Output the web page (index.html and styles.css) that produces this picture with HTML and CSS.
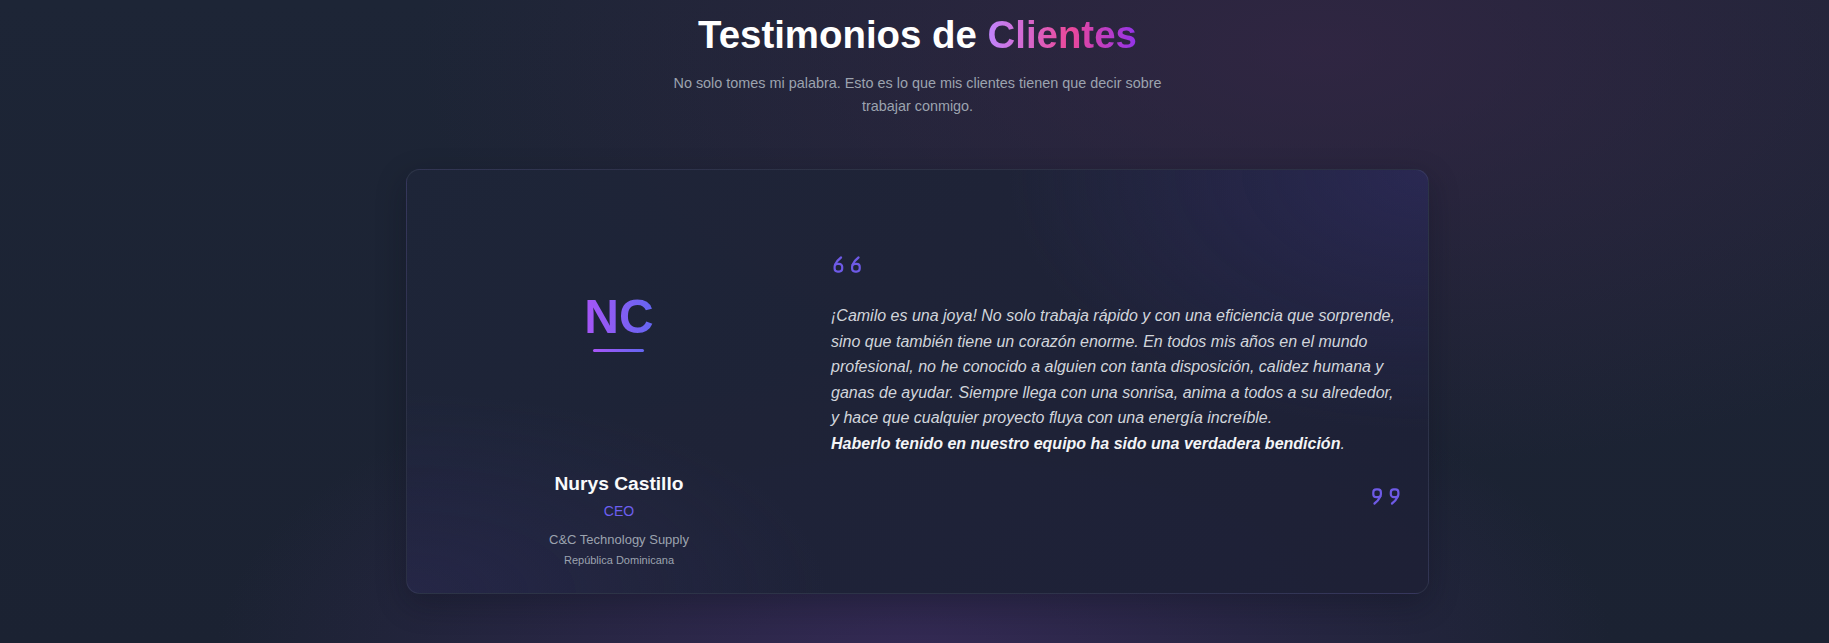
FILE: index.html
```html
<!DOCTYPE html>
<html lang="es">
<head>
<meta charset="utf-8">
<title>Testimonios de Clientes</title>
<link rel="stylesheet" href="styles.css">
</head>
<body>
<section class="testimonials">
  <header class="heading">
    <h2 class="title">Testimonios de <span class="accent">Clientes</span></h2>
    <p class="subtitle">No solo tomes mi palabra. Esto es lo que mis clientes tienen que decir sobre trabajar conmigo.</p>
  </header>

  <article class="card">
    <div class="author">
      <div class="avatar">
        <span class="initials">NC</span>
        <span class="initials-bar"></span>
      </div>
      <div class="info">
        <div class="name">Nurys Castillo</div>
        <div class="role">CEO</div>
        <div class="company">C&amp;C Technology Supply</div>
        <div class="country">República Dominicana</div>
      </div>
    </div>

    <div class="quote">
      <svg class="qmark" width="28" height="17" viewBox="0 0 28 17" aria-hidden="true">
        <g fill="none" stroke="currentColor" stroke-width="2.2" stroke-linecap="round" stroke-linejoin="round">
          <path d="M8 1.5 Q4 4.5 2.2 8.5"/>
          <rect x="1.6" y="7.8" width="7.6" height="7.8" rx="3"/>
          <path d="M25.5 1.5 Q21.5 4.5 19.7 8.5"/>
          <rect x="19.1" y="7.8" width="7.6" height="7.8" rx="3"/>
        </g>
      </svg>
      <p class="quote-text">¡Camilo es una joya! No solo trabaja rápido y con una eficiencia que sorprende, sino que también tiene un corazón enorme. En todos mis años en el mundo profesional, no he conocido a alguien con tanta disposición, calidez humana y ganas de ayudar. Siempre llega con una sonrisa, anima a todos a su alrededor, y hace que cualquier proyecto fluya con una energía increíble.<br><strong>Haberlo tenido en nuestro equipo ha sido una verdadera bendición</strong>.</p>
      <svg class="qmark qmark-close" width="28" height="17" viewBox="0 0 28 17" aria-hidden="true">
        <g fill="none" stroke="currentColor" stroke-width="2.2" stroke-linecap="round" stroke-linejoin="round" transform="rotate(180 14 8.5)">
          <path d="M8 1.5 Q4 4.5 2.2 8.5"/>
          <rect x="1.6" y="7.8" width="7.6" height="7.8" rx="3"/>
          <path d="M25.5 1.5 Q21.5 4.5 19.7 8.5"/>
          <rect x="19.1" y="7.8" width="7.6" height="7.8" rx="3"/>
        </g>
      </svg>
    </div>
  </article>
</section>
</body>
</html>
```

FILE: styles.css
```css
html, body {
  margin: 0;
  padding: 0;
}

body {
  min-height: 643px;
  font-family: "Liberation Sans", Arial, sans-serif;
  color: #e5e7eb;
  background-color: #1c2333;
  background-image:
    radial-gradient(ellipse 700px 320px at 50% 102%, rgba(72, 48, 112, 0.55), rgba(72, 48, 112, 0) 100%),
    radial-gradient(ellipse 900px 420px at 72% 8%, rgba(60, 38, 74, 0.6), rgba(60, 38, 74, 0) 100%),
    linear-gradient(180deg, #1d2536 0%, #1b2232 100%);
  overflow: hidden;
}

.testimonials {
  padding: 11px 0 40px 6px;
  display: flex;
  flex-direction: column;
  align-items: center;
}

.heading {
  display: flex;
  flex-direction: column;
  align-items: center;
  text-align: center;
}

.title {
  margin: 0;
  font-size: 38.4px;
  line-height: 48px;
  font-weight: 700;
  color: #ffffff;
}

.accent {
  background: linear-gradient(90deg, #c084fc 0%, #ec4899 55%, #9333ea 100%);
  -webkit-background-clip: text;
  background-clip: text;
  color: transparent;
}

.subtitle {
  margin: 13px 0 0;
  max-width: 512px;
  font-size: 14.4px;
  line-height: 23px;
  color: #9ca3af;
}

.card {
  margin-top: 51px;
  width: 1023px;
  box-sizing: border-box;
  padding: 32px 28px 26px 32px;
  display: grid;
  grid-template-columns: 360px 1fr;
  column-gap: 32px;
  border: 1px solid rgba(148, 163, 184, 0.12);
  border-radius: 14px;
  background-color: rgba(30, 33, 54, 0.85);
  background-image:
    radial-gradient(ellipse 420px 260px at 100% 0%, rgba(58, 50, 120, 0.42), rgba(58, 50, 120, 0) 100%),
    radial-gradient(ellipse 420px 200px at 0% 100%, rgba(56, 48, 110, 0.28), rgba(56, 48, 110, 0) 100%),
    linear-gradient(135deg, rgba(31, 40, 58, 0.6), rgba(30, 32, 55, 0.6));
  box-shadow: 0 10px 30px rgba(10, 12, 24, 0.3);
}

.author {
  display: flex;
  flex-direction: column;
  align-items: center;
  text-align: center;
}

.avatar {
  padding-top: 86px;
  display: flex;
  flex-direction: column;
  align-items: center;
}

.initials {
  font-size: 48px;
  line-height: 57px;
  font-weight: 700;
  background: linear-gradient(90deg, #a855f7 0%, #6366f1 100%);
  -webkit-background-clip: text;
  background-clip: text;
  color: transparent;
}

.initials-bar {
  margin-top: 4px;
  width: 51px;
  height: 3px;
  border-radius: 2px;
  background: linear-gradient(90deg, #a855f7 0%, #6366f1 100%);
}

.info {
  margin-top: 119px;
  display: flex;
  flex-direction: column;
  align-items: center;
}

.name {
  font-size: 19.2px;
  line-height: 26px;
  font-weight: 700;
  color: #f9fafb;
}

.role {
  margin-top: 4px;
  font-size: 14px;
  line-height: 20px;
  color: #6d5ff0;
}

.company {
  margin-top: 9px;
  font-size: 13px;
  line-height: 20px;
  color: #9ca3af;
}

.country {
  margin-top: 3px;
  font-size: 11px;
  line-height: 14px;
  color: #9ca3af;
}

.quote {
  align-self: start;
  margin-top: 54px;
  display: flex;
  flex-direction: column;
}

.qmark {
  display: block;
  color: #6e5ae6;
  margin-left: 2px;
}

.qmark-close {
  align-self: flex-end;
  margin: 31px 0 0;
}

.quote-text {
  margin: 30px 0 0;
  font-size: 16px;
  line-height: 25.6px;
  font-style: italic;
  color: #d1d5db;
}

.quote-text strong {
  color: #f3f4f6;
  font-weight: 700;
}
```
